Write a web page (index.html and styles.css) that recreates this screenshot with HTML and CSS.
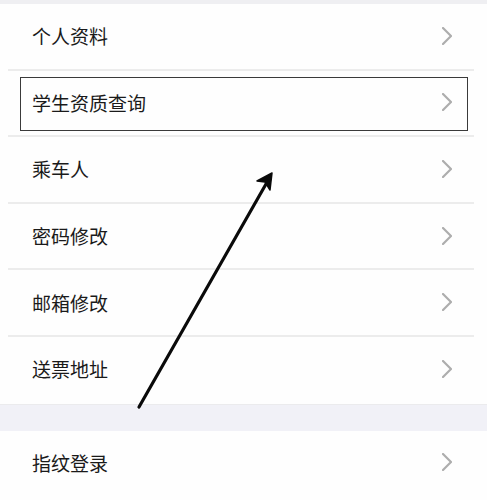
FILE: index.html
```html
<!DOCTYPE html>
<html lang="zh">
<head>
<meta charset="utf-8">
<title>设置</title>
<link rel="stylesheet" href="styles.css">
</head>
<body>
<div class="page">
  <div class="strip"></div>
  <ul class="group">
    <li class="row"><span class="label">个人资料</span><svg class="chev" viewBox="0 0 10 18"><polyline points="1,1 9,9 1,17"/></svg></li>
    <li class="row marked"><span class="label">学生资质查询</span><svg class="chev" viewBox="0 0 10 18"><polyline points="1,1 9,9 1,17"/></svg><span class="mark"></span></li>
    <li class="row"><span class="label">乘车人</span><svg class="chev" viewBox="0 0 10 18"><polyline points="1,1 9,9 1,17"/></svg></li>
    <li class="row"><span class="label">密码修改</span><svg class="chev" viewBox="0 0 10 18"><polyline points="1,1 9,9 1,17"/></svg></li>
    <li class="row"><span class="label">邮箱修改</span><svg class="chev" viewBox="0 0 10 18"><polyline points="1,1 9,9 1,17"/></svg></li>
    <li class="row last"><span class="label">送票地址</span><svg class="chev" viewBox="0 0 10 18"><polyline points="1,1 9,9 1,17"/></svg></li>
  </ul>
  <div class="band"></div>
  <ul class="group">
    <li class="row last"><span class="label">指纹登录</span><svg class="chev" viewBox="0 0 10 18"><polyline points="1,1 9,9 1,17"/></svg></li>
  </ul>
  <svg class="arrow" viewBox="0 0 487 500" width="487" height="500">
    <line x1="139" y1="407" x2="270" y2="177"/>
    <polygon points="272,173 257,181 265,182 270,190"/>
  </svg>
</div>
</body>
</html>
```

FILE: styles.css
```css
html, body {
  margin: 0;
  padding: 0;
  background: #fefefe;
}
.page {
  position: relative;
  width: 487px;
  height: 500px;
  overflow: hidden;
  font-family: "Noto Sans CJK SC", "Noto Sans", sans-serif;
  color: #1a1a1a;
}
.strip {
  height: 4px;
  background: #efeff2;
}
.group {
  list-style: none;
  margin: 0;
  padding: 0;
}
.row {
  position: relative;
  height: 66.6px;
  box-sizing: border-box;
  display: flex;
  align-items: center;
  justify-content: space-between;
  padding: 0 35px 3px 32px;
}
.row::after {
  content: "";
  position: absolute;
  left: 8px;
  right: 13px;
  bottom: 0;
  height: 2px;
  background: #ececec;
}
.row.last::after {
  display: none;
}
.label {
  font-size: 19px;
  line-height: 1;
}
.chev {
  width: 10px;
  height: 18px;
  fill: none;
  stroke: #adadad;
  stroke-width: 2.2;
  stroke-linecap: round;
  stroke-linejoin: round;
}
.mark {
  position: absolute;
  left: 20px;
  right: 19px;
  top: 6px;
  bottom: 6px;
  border: 1.5px solid #3a3a3a;
}
.band {
  height: 27px;
  background: #f1f1f7;
  border-top: 1px solid #ebebed;
  box-sizing: border-box;
}
.arrow {
  position: absolute;
  left: 0;
  top: 0;
  pointer-events: none;
}
.arrow line {
  stroke: #0a0a0a;
  stroke-width: 3.2;
  stroke-linecap: round;
}
.arrow polygon {
  fill: #0a0a0a;
  stroke: #0a0a0a;
  stroke-width: 1.5;
  stroke-linejoin: round;
}
```
